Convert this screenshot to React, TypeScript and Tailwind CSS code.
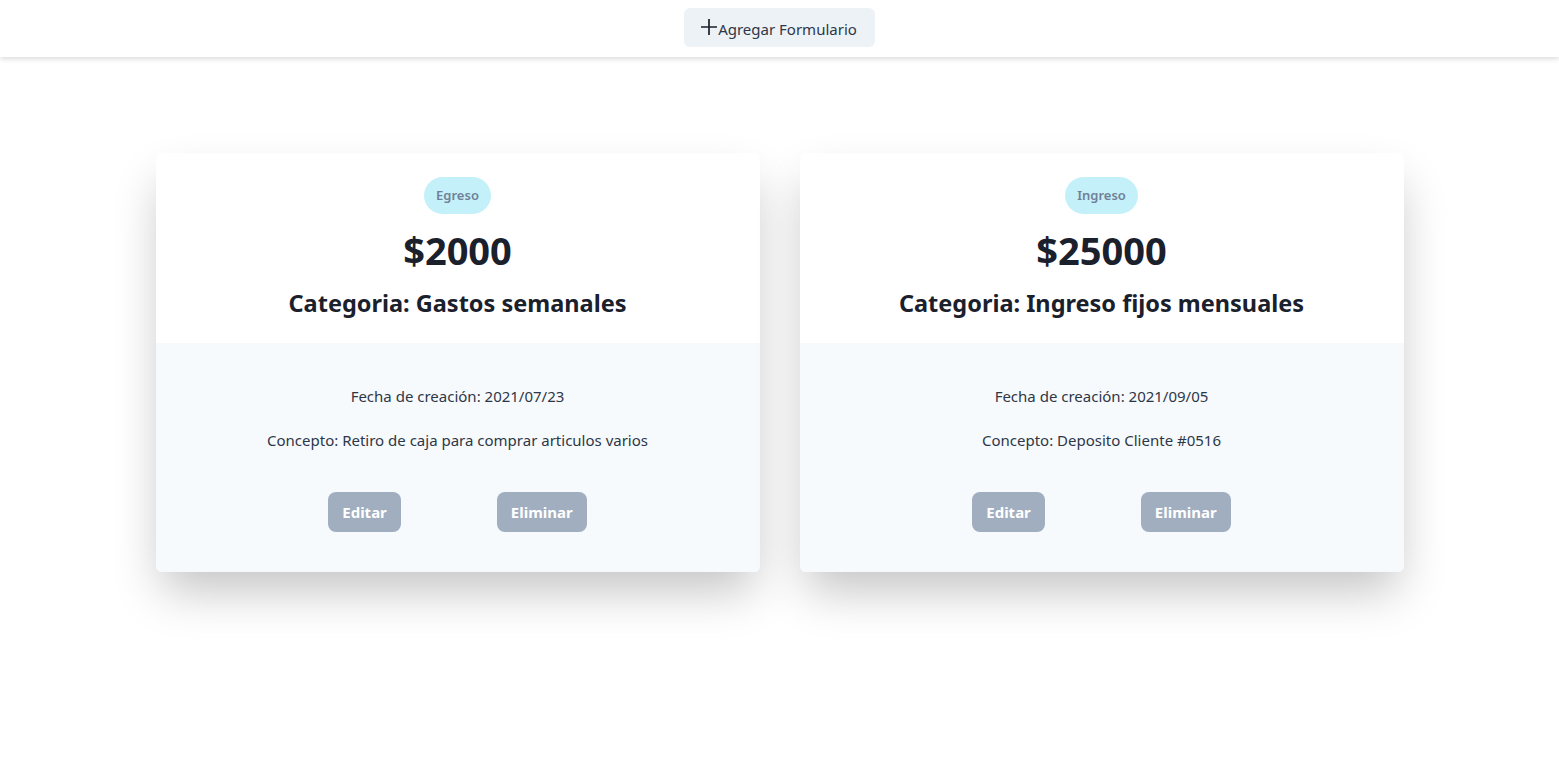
type Registro = {
  id: number
  tipo: string
  monto: string
  categoria: string
  fecha: string
  concepto: string
}

const registros: Registro[] = [
  {
    id: 1,
    tipo: 'Egreso',
    monto: '$2000',
    categoria: 'Gastos semanales',
    fecha: '2021/07/23',
    concepto: 'Retiro de caja para comprar articulos varios',
  },
  {
    id: 2,
    tipo: 'Ingreso',
    monto: '$25000',
    categoria: 'Ingreso fijos mensuales',
    fecha: '2021/09/05',
    concepto: 'Deposito Cliente #0516',
  },
]

export default function App() {
  return (
    <div className="min-h-screen bg-white text-[#1a202c] font-['Noto_Sans',sans-serif]">
      {/* Header */}
      <header className="h-[57px] flex items-start justify-center pt-2 bg-white shadow-[0_2px_5px_rgba(0,0,0,0.14)]">
        <button className="h-[39px] pl-[16px] pr-[18px] flex items-center rounded-md bg-[#edf2f7] text-[15px] text-[#2d3748]">
          <svg width="18" height="18" viewBox="0 0 18 18" className="mt-[-1px]">
            <path d="M9 1v16M1 9h16" stroke="#1a202c" strokeWidth="1.7" fill="none" />
          </svg>
          <span className="pt-[3px]">Agregar Formulario</span>
        </button>
      </header>

      {/* Cards */}
      <div className="flex justify-center gap-10 pt-24">
        {registros.map((r) => (
          <Card key={r.id} registro={r} />
        ))}
      </div>
    </div>
  )
}

function Card({ registro }: { registro: Registro }) {
  return (
    <div className="w-[604px] rounded-md overflow-hidden bg-white shadow-[0_24px_45px_-6px_rgba(0,0,0,0.24)]">
      {/* Top */}
      <div className="h-[190px] flex flex-col items-center pt-6">
        <span className="h-[37px] px-3 flex items-center rounded-full bg-[#c4f1f9] text-[13px] font-semibold text-[#718096]">
          {registro.tipo}
        </span>
        <p className="mt-[10px] text-[38px] leading-[52px] font-bold">{registro.monto}</p>
        <p className="mt-[10px] text-[23.5px] leading-[34px] font-bold">Categoria: {registro.categoria}</p>
      </div>

      {/* Bottom */}
      <div className="h-[229px] bg-[#f7fafc] flex flex-col items-center pt-[42px] text-[15px] text-[#2d3748]">
        <p className="leading-[22px]">Fecha de creación: {registro.fecha}</p>
        <p className="mt-[22px] leading-[22px]">Concepto: {registro.concepto}</p>
        <div className="mt-[41px] flex gap-24">
          <button className="h-10 px-[14px] rounded-lg bg-[#a0aec0] text-white text-[15px] font-bold">Editar</button>
          <button className="h-10 px-[14px] rounded-lg bg-[#a0aec0] text-white text-[15px] font-bold">Eliminar</button>
        </div>
      </div>
    </div>
  )
}
